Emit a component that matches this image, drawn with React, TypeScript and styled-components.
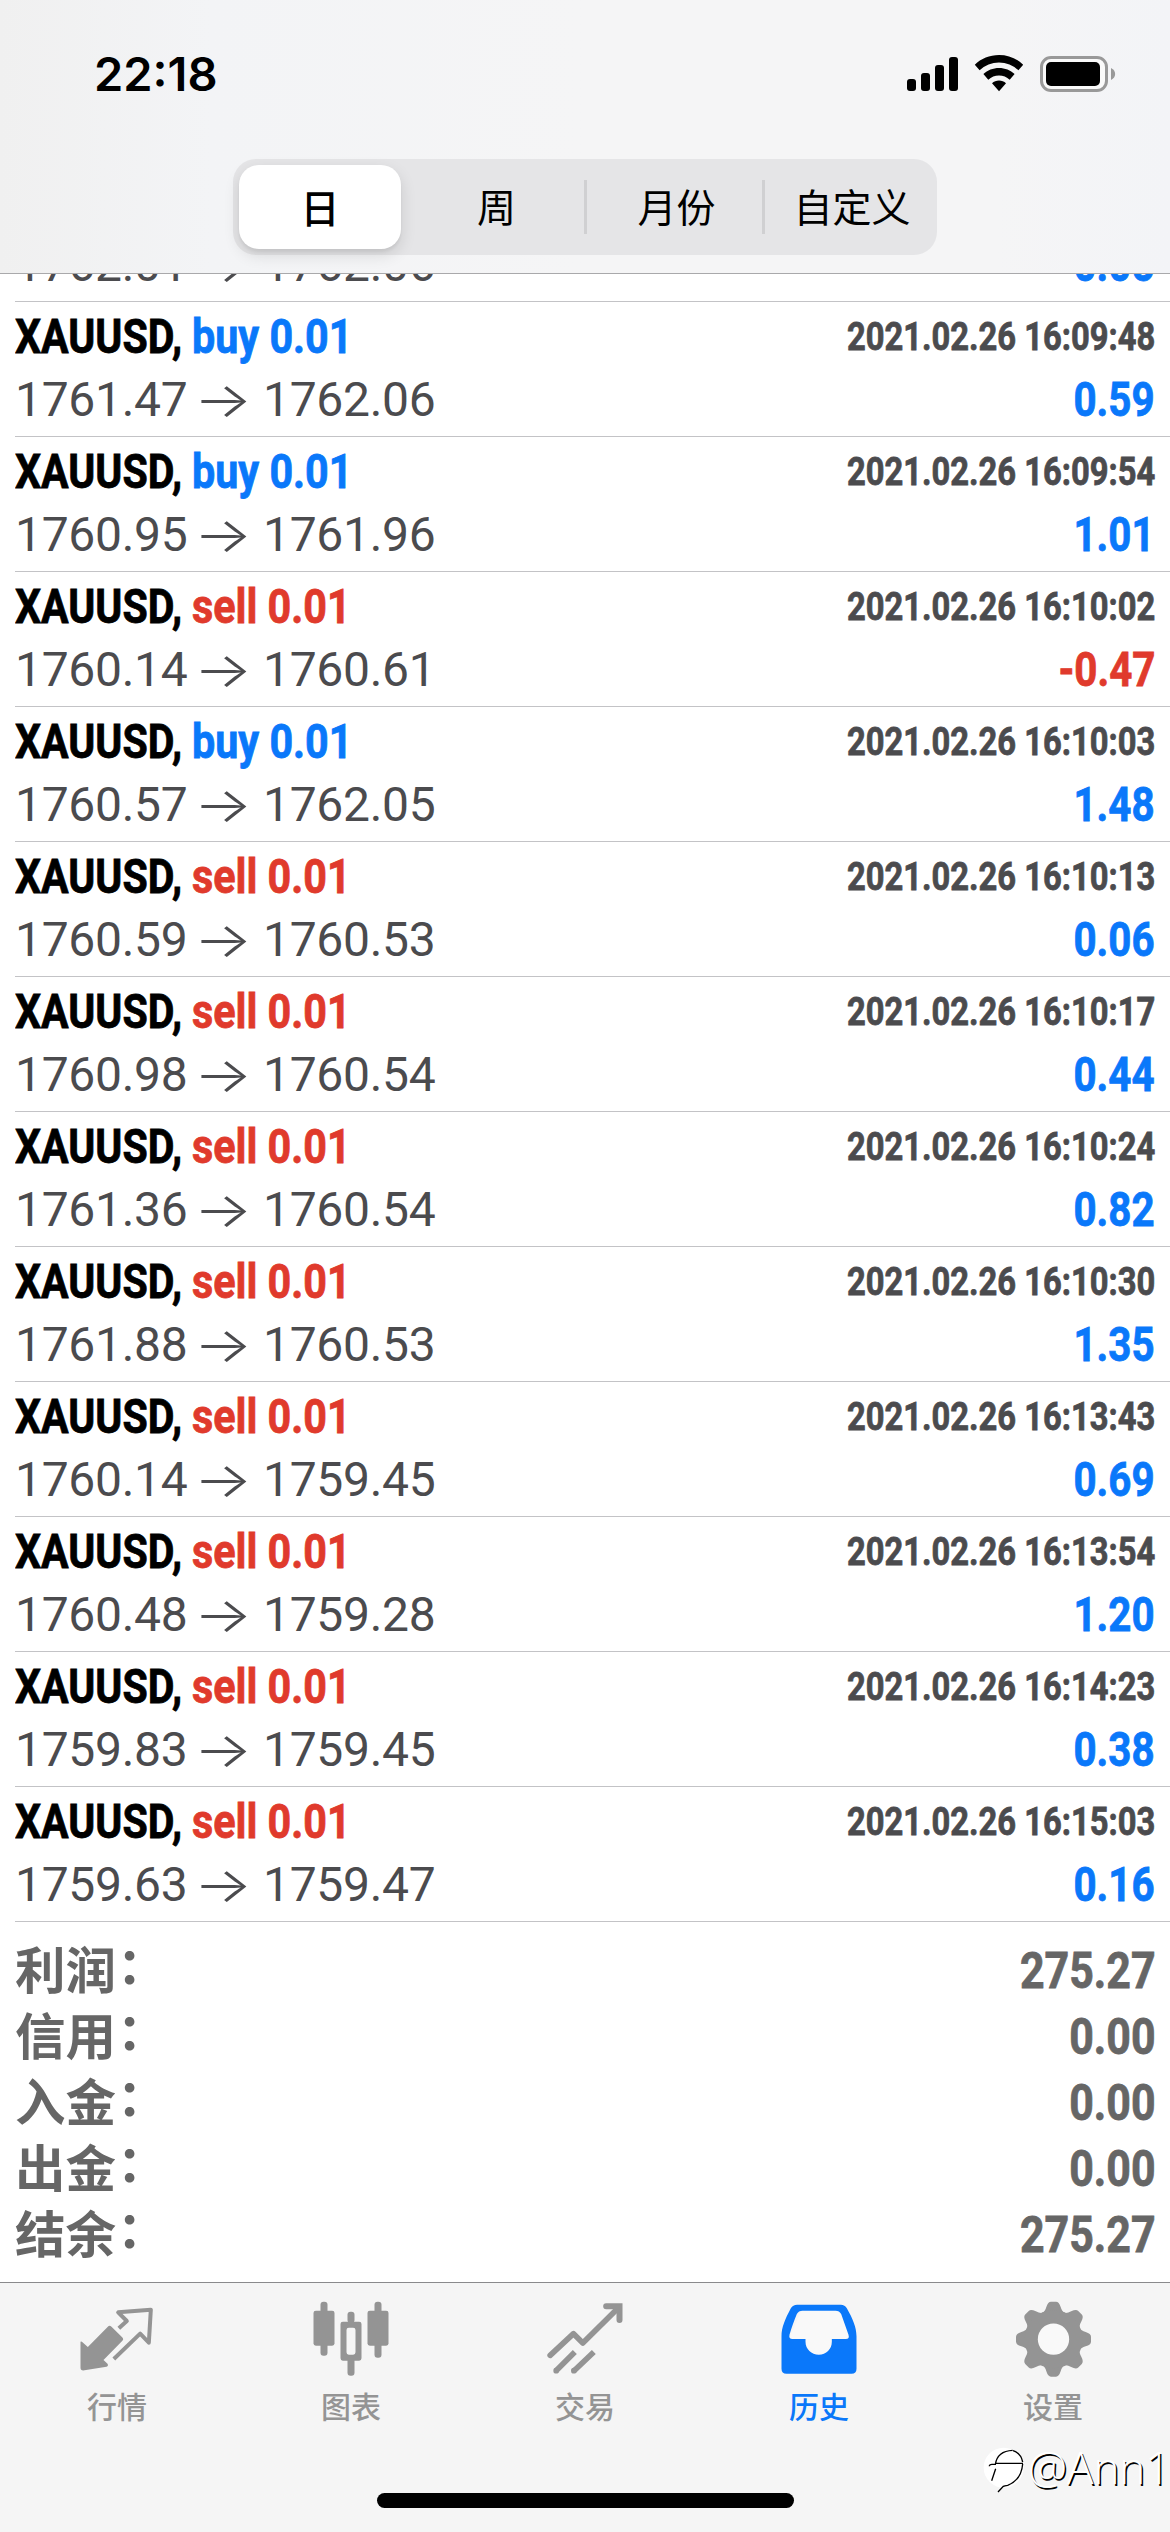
import React from "react";
import styled, { createGlobalStyle } from "styled-components";

const BLUE = "#0a78fa";
const RED = "#e03a2c";
const CJK = `"Noto Sans CJK SC", sans-serif`;

const GlobalStyle = createGlobalStyle`
  * { box-sizing: border-box; }
  body { margin: 0; background: #fff; }
`;

const Screen = styled.div`
  position: relative;
  width: 1170px;
  height: 2532px;
  display: flex;
  flex-direction: column;
  overflow: hidden;
  background: #fff;
  font-family: Roboto, "Noto Sans CJK SC", sans-serif;
`;

const Header = styled.header`
  height: 274px;
  flex: none;
  display: flex;
  flex-direction: column;
  align-items: center;
  background: linear-gradient(90deg, #f0f0f0 0%, #f3f4f6 18%, #f5f5f6 50%, #f5f5f6 85%, #f3f4f7 100%);
  border-bottom: 1px solid #a9a9ab;
`;

const StatusBar = styled.div`
  width: 100%;
  height: 159px;
  padding: 42px 54px 0 94px;
  display: flex;
  justify-content: space-between;
  align-items: flex-start;
`;

const Clock = styled.span`
  font: 600 47px/64px Inter, sans-serif;
  color: #000;
`;

const StatusIcons = styled.svg`
  display: block;
  width: 210px;
  height: 40px;
  margin-top: 12px;
`;

const Segments = styled.div`
  width: 704px;
  height: 96px;
  padding: 6px;
  display: flex;
  align-items: center;
  border-radius: 23px;
  background: #e5e5e7;
`;

const Segment = styled.div<{ $active?: boolean; $divided?: boolean; $w: number; $shift?: number }>`
  width: ${(p) => p.$w}px;
  height: ${(p) => (p.$active ? 84 : 54)}px;
  flex: none;
  padding: 0 0 ${(p) => (p.$active ? 3 : 0)}px ${(p) => p.$shift ?? 0}px;
  display: flex;
  align-items: center;
  justify-content: center;
  border-right: ${(p) => (p.$divided ? "3px solid #d0d0d2" : "0")};
  border-radius: ${(p) => (p.$active ? "20px" : "0")};
  background: ${(p) => (p.$active ? "#fff" : "transparent")};
  box-shadow: ${(p) => (p.$active ? "0 6px 16px rgba(0,0,0,.12), 0 3px 3px rgba(0,0,0,.05)" : "none")};
  font: ${(p) => (p.$active ? 500 : 400)} 39px/50px ${CJK};
  color: #000;
  & > span { margin-top: ${(p) => (p.$active ? 0 : -4)}px; }
`;

const History = styled.main`
  height: 1648px;
  flex: none;
  padding-left: 15px;
  overflow: hidden;
`;

const Deal = styled.div<{ $partial?: boolean }>`
  height: ${(p) => (p.$partial ? 28 : 135)}px;
  padding: 0 15px 5px 0;
  display: flex;
  flex-direction: column;
  justify-content: flex-end;
  overflow: hidden;
  border-bottom: 1px solid #c3c3c6;
`;

const Line = styled.div`
  height: 63px;
  flex: none;
  display: flex;
  justify-content: space-between;
`;

const Title = styled.div`
  display: flex;
`;

const Narrow = styled.span<{ $k: number; $color: string; $w?: number; $right?: boolean; $size?: number }>`
  display: block;
  width: ${(p) => (p.$w ? `${p.$w}px` : "auto")};
  white-space: nowrap;
  font-size: ${(p) => p.$size ?? 48}px;
  font-weight: 700;
  line-height: 63px;
  color: ${(p) => p.$color};
  -webkit-text-stroke: 0.8px ${(p) => p.$color};
  transform: scaleX(${(p) => p.$k});
  transform-origin: ${(p) => (p.$right ? "right" : "left")} center;
`;

const Prices = styled.div`
  display: flex;
  font-size: 48px;
  letter-spacing: -0.3px;
  line-height: 63px;
  color: #4b4b4e;
`;

const Price = styled.span`
  width: 173px;
`;

const Arrow = styled.span`
  width: 75px;
  padding-right: 5px;
  display: flex;
  justify-content: center;
  font-family: Inter, sans-serif;
  font-weight: 300;
  font-size: 48px;
  & > span { transform: scaleX(1.28); }
`;

const Summary = styled.div`
  height: 360px;
  flex: none;
  padding: 12px 14px 0 15px;
`;

const SummaryRow = styled.div`
  height: 66px;
  display: flex;
  align-items: flex-start;
  justify-content: space-between;
`;

const Total = styled.div`
  padding-top: 5px;
`;

const Label = styled.div`
  display: flex;
  font: 700 50.5px/66px ${CJK};
  color: #666;
`;

const Colon = styled.span`
  margin: -5px 0 0 1px;
`;

const Tabs = styled.nav`
  height: 250px;
  flex: none;
  padding-top: 18px;
  display: flex;
  align-items: flex-start;
  background: #f5f5f5;
  border-top: 1px solid #8a8a8c;
`;

const Tab = styled.div<{ $active?: boolean }>`
  width: 234px;
  display: flex;
  flex-direction: column;
  align-items: center;
  color: ${(p) => (p.$active ? BLUE : "#949494")};
  font: 500 30px/40px ${CJK};
`;

const TabIcon = styled.svg`
  display: block;
  width: 75px;
  height: 75px;
  margin-bottom: 9px;
  overflow: visible;
`;

const HomeIndicator = styled.div`
  position: absolute;
  left: 377px;
  top: 2493px;
  width: 417px;
  height: 15px;
  border-radius: 8px;
  background: #000;
`;

const Watermark = styled.div`
  position: absolute;
  left: 983px;
  top: 2447px;
  display: flex;
  align-items: center;
`;

const WatermarkLogo = styled.svg`
  display: block;
  width: 44px;
  height: 50px;
`;

const WatermarkText = styled.span`
  margin: -10px 0 0 1px;
  font: 300 44px/50px "Open Sans", sans-serif;
  color: #fff;
  text-shadow: 1.5px 1.5px 0 #000;
`;

type Side = "buy" | "sell";
type DealData = [Side, string, string, string, string];

const deals: DealData[] = [
  ["buy", "2021.02.26 16:09:48", "1761.47", "1762.06", "0.59"],
  ["buy", "2021.02.26 16:09:54", "1760.95", "1761.96", "1.01"],
  ["sell", "2021.02.26 16:10:02", "1760.14", "1760.61", "-0.47"],
  ["buy", "2021.02.26 16:10:03", "1760.57", "1762.05", "1.48"],
  ["sell", "2021.02.26 16:10:13", "1760.59", "1760.53", "0.06"],
  ["sell", "2021.02.26 16:10:17", "1760.98", "1760.54", "0.44"],
  ["sell", "2021.02.26 16:10:24", "1761.36", "1760.54", "0.82"],
  ["sell", "2021.02.26 16:10:30", "1761.88", "1760.53", "1.35"],
  ["sell", "2021.02.26 16:13:43", "1760.14", "1759.45", "0.69"],
  ["sell", "2021.02.26 16:13:54", "1760.48", "1759.28", "1.20"],
  ["sell", "2021.02.26 16:14:23", "1759.83", "1759.45", "0.38"],
  ["sell", "2021.02.26 16:15:03", "1759.63", "1759.47", "0.16"],
];

const totals = [
  ["利润", "275.27"],
  ["信用", "0.00"],
  ["入金", "0.00"],
  ["出金", "0.00"],
  ["结余", "275.27"],
];

const gearTeeth = [0, 45, 90, 135, 180, 225, 270, 315];

function PriceLine({ open, close, profit }: { open: string; close: string; profit: string }) {
  return (
    <Line>
      <Prices>
        <Price>{open}</Price>
        <Arrow><span>→</span></Arrow>
        <Price>{close}</Price>
      </Prices>
      <Narrow $k={0.84} $right $color={profit.startsWith("-") ? RED : BLUE}>{profit}</Narrow>
    </Line>
  );
}

export default function App() {
  return (
    <Screen>
      <GlobalStyle />
      <Header>
        <StatusBar>
          <Clock>22:18</Clock>
          <StatusIcons viewBox="906 54 210 40">
            <rect x="907" y="79" width="9" height="12" rx="3" />
            <rect x="921" y="73" width="9" height="18" rx="3" />
            <rect x="935" y="65" width="9" height="26" rx="3" />
            <rect x="949" y="57" width="9" height="34" rx="3" />
            <path d="M999 55c-9.400 0-17.900 3.600-24.200 9.700l4.800 5.600a28 28 0 0 1 38.800 0l4.800-5.600C1016.900 58.600 1008.400 55 999 55z" />
            <path d="M999 68c-6 0-11.500 2.300-15.600 6.100l4.900 5.600a15.500 15.500 0 0 1 21.400 0l4.900-5.600C1010.500 70.300 1005 68 999 68z" />
            <path d="M999 80.600c-2.700 0-5.100 1-7 2.700l7 8 7-8c-1.900-1.700-4.300-2.700-7-2.700z" />
            <rect x="1041.500" y="57.500" width="65" height="33" rx="9.500" fill="#fafafa" stroke="#999" strokeWidth="3" />
            <rect x="1046" y="62" width="54" height="24" rx="5" />
            <path d="M1111 68c5.500 2.500 5.500 9.500 0 12z" fill="#999" />
          </StatusIcons>
        </StatusBar>
        <Segments>
          <Segment $w={162} $active><span>日</span></Segment>
          <Segment $w={186} $shift={8} $divided><span>周</span></Segment>
          <Segment $w={178} $shift={4} $divided><span>月份</span></Segment>
          <Segment $w={166} $shift={8}><span>自定义</span></Segment>
        </Segments>
      </Header>

      <History>
        <Deal $partial>
          <PriceLine open="1762.01" close="1762.06" profit="0.05" />
        </Deal>
        {deals.map(([side, time, open, close, profit]) => (
          <Deal key={time}>
            <Line>
              <Title>
                <Narrow $k={0.855} $w={177} $color="#000">XAUUSD,</Narrow>
                <Narrow $k={0.86} $color={side === "buy" ? BLUE : RED}>{side} 0.01</Narrow>
              </Title>
              <Narrow $k={0.828} $size={39.5} $right $color="#4b4b4e">{time}</Narrow>
            </Line>
            <PriceLine open={open} close={close} profit={profit} />
          </Deal>
        ))}
      </History>

      <Summary>
        {totals.map(([label, value]) => (
          <SummaryRow key={label}>
            <Label>
              {label}
              <Colon>：</Colon>
            </Label>
            <Total>
              <Narrow $k={0.85} $size={50.5} $right $color="#666">{value}</Narrow>
            </Total>
          </SummaryRow>
        ))}
      </Summary>

      <Tabs>
        <Tab>
          <TabIcon viewBox="238.5 94 225 225" fill="currentColor">
            <path d="M240 216q3-2 6 2l16 14 60-61q5-5 11 0l32 32q6 6 0 11l-56 57 12 11q4 6-3 9l-66 11q-12 2-12-8z" />
            <path d="M355 176l24-22-26-26 98-8-6 99-26-27-79 76" fill="none" stroke="currentColor" strokeWidth="12" strokeLinejoin="round" />
          </TabIcon>
          行情
        </Tab>
        <Tab>
          <TabIcon viewBox="940.5 94 225 225" fill="currentColor">
            <rect x="960" y="96" width="21" height="162" rx="9" />
            <rect x="939" y="123" width="63" height="105" rx="7" />
            <rect x="1122" y="96" width="21" height="168" rx="9" />
            <rect x="1101" y="123" width="63" height="105" rx="7" />
            <rect x="1041" y="126" width="21" height="34" rx="9" />
            <rect x="1041" y="264" width="21" height="54" rx="9" />
            <path fillRule="evenodd" d="M1027 156h49q7 0 7 7v103q0 7-7 7h-49q-7 0-7-7V163q0-7 7-7zM1045 174q-7 0-7 7v67q0 7 7 7h13q7 0 7-7v-67q0-7-7-7z" />
          </TabIcon>
          图表
        </Tab>
        <Tab>
          <TabIcon viewBox="292.5 94 225 225" fill="none" stroke="currentColor" strokeWidth="17" strokeLinejoin="round">
            <path d="M299 257l70-65 28 28L503 115" strokeLinecap="round" />
            <path d="M467 110h40v41" strokeWidth="18" strokeLinejoin="miter" strokeLinecap="round" />
            <path d="M316 304l57-57M370 304l60-57" />
            <circle cx="317" cy="303" r="8.500" fill="currentColor" stroke="none" />
            <circle cx="370" cy="303" r="8.500" fill="currentColor" stroke="none" />
          </TabIcon>
          交易
        </Tab>
        <Tab $active>
          <TabIcon viewBox="994.5 94 225 225" fill="currentColor">
            <path d="M1056 114h98q10 4 25 20l22 76-92 60-95-60z" fill="#f9f9f9" />
            <path fillRule="evenodd" d="M1040 105h131q12 0 18 11c18 32 29 57 29 84v97q0 15-15 15h-195q-15 0-15-15v-97c0-27 11-52 28-84q6-11 19-11zM1056 123q-12 0-17 10c-8 20-16 42-22 62q-3 13 9 13h39v8c0 22 18 39 40 39s39-17 39-39v-8h42q12 0 8-13l-22-62q-5-10-17-10z" />
          </TabIcon>
          历史
        </Tab>
        <Tab>
          <TabIcon viewBox="495 94 225 225" fill="currentColor">
            {gearTeeth.map((angle) => (
              <path key={angle} transform={`rotate(${angle} 607.5 208.5)`} d="M574 130q8-4 12-18 5-16 14-16h15q9 0 14 16 4 14 12 18l8 40h-83z" />
            ))}
            <circle cx="607.5" cy="208.500" r="87" />
            <circle cx="607.5" cy="208.500" r="47" fill="#f9f9f9" />
          </TabIcon>
          设置
        </Tab>
      </Tabs>

      <HomeIndicator />

      <Watermark>
        <WatermarkLogo viewBox="399 535 132 150">
          <circle cx="461" cy="597" r="60" fill="#fff" />
          <path d="M437 584h82M418 593q0-6 8-6h10q6-40 52-42M437 600l-12 36" fill="none" stroke="#000" strokeWidth="4" />
          <path d="M489 546q24 8 29 34M518 586q-4 48-45 64-10 1-13 3l-16 17" fill="none" stroke="#000" strokeWidth="4" />
        </WatermarkLogo>
        <WatermarkText>@Ann1</WatermarkText>
      </Watermark>
    </Screen>
  );
}
